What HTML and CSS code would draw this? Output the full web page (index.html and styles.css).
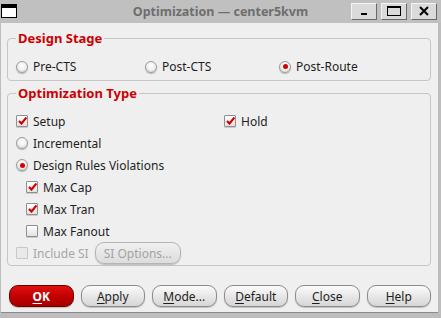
FILE: index.html
```html
<!DOCTYPE html>
<html>
<head>
<meta charset="utf-8">
<link rel="stylesheet" href="styles.css">
</head>
<body>
<div class="window">
  <div class="titlebar">
    <div class="tleft"><div class="winicon"></div></div>
    <div class="title">Optimization — center5kvm</div>
    <div class="wbtns">
      <div class="wbtn"><svg width="12" height="10" viewBox="0 0 12 10"><rect x="3" y="7" width="6" height="2" fill="#000"/></svg></div>
      <div class="wbtn"><svg width="16" height="12" viewBox="0 0 16 12"><rect x="1.5" y="1.5" width="13" height="9" fill="none" stroke="#000" stroke-width="1"/><rect x="1" y="1" width="14" height="2" fill="#000"/></svg></div>
      <div class="wbtn"><svg width="12" height="12" viewBox="0 0 12 12"><path d="M2 2 L10 10 M10 2 L2 10" stroke="#000" stroke-width="2"/></svg></div>
    </div>
  </div>
  <div class="panel">
    <fieldset class="group stage">
      <legend>Design Stage</legend>
      <div class="stage-row">
        <label class="opt"><span class="radio"></span>Pre-CTS</label>
        <label class="opt"><span class="radio"></span>Post-CTS</label>
        <label class="opt"><span class="radio on"></span>Post-Route</label>
      </div>
    </fieldset>
    <fieldset class="group otype">
      <legend>Optimization Type</legend>
      <div class="row two">
        <label class="opt"><span class="check on"></span>Setup</label>
        <label class="opt"><span class="check on"></span>Hold</label>
      </div>
      <div class="row"><label class="opt"><span class="radio"></span>Incremental</label></div>
      <div class="row"><label class="opt"><span class="radio on"></span>Design Rules Violations</label></div>
      <div class="row indent"><label class="opt"><span class="check on"></span>Max Cap</label></div>
      <div class="row indent"><label class="opt"><span class="check on"></span>Max Tran</label></div>
      <div class="row indent"><label class="opt"><span class="check"></span>Max Fanout</label></div>
      <div class="row"><label class="opt disabled"><span class="check"></span>Include SI</label><span class="btn sibtn">SI Options...</span></div>
    </fieldset>
    <div class="buttons">
      <span class="btn ok"><u>O</u>K</span>
      <span class="btn"><u>A</u>pply</span>
      <span class="btn"><u>M</u>ode...</span>
      <span class="btn"><u>D</u>efault</span>
      <span class="btn"><u>C</u>lose</span>
      <span class="btn"><u>H</u>elp</span>
    </div>
  </div>
</div>
</body>
</html>
```
FILE: styles.css
```css
html, body {
  margin: 0;
  padding: 0;
}
body {
  width: 441px;
  height: 318px;
  background: #bdbdbd;
  font-family: "Noto Sans", "Open Sans", sans-serif;
  font-size: 12px;
  color: #1e1e1e;
  overflow: hidden;
}
.window {
  width: 441px;
  height: 318px;
  display: flex;
  flex-direction: column;
}
.titlebar {
  height: 23px;
  display: grid;
  grid-template-columns: 1fr auto 1fr;
  align-items: center;
  background: #c0c0c0;
}
.tleft {
  display: flex;
  align-items: center;
}
.winicon {
  width: 14px;
  height: 9px;
  margin-left: 1px;
  margin-top: -1px;
  border: 1px solid #000;
  border-top: 4px solid #000;
  background: #fff;
}
.title {
  text-align: center;
  font-weight: bold;
  font-size: 12.5px;
  color: #6e6e6e;
  white-space: nowrap;
}
.wbtns {
  display: flex;
  justify-content: flex-end;
  gap: 4px;
  margin-right: 4px;
  margin-top: -1px;
}
.wbtn {
  width: 24px;
  height: 15px;
  border: 1px solid;
  border-color: #f4f4f4 #6a6a6a #6a6a6a #f4f4f4;
  background: #dadada;
  display: flex;
  align-items: center;
  justify-content: center;
}
.panel {
  margin-left: 1px;
  width: 437px;
  height: 289px;
  background: #efefef;
  box-shadow: 0 1px 0 #8a8a8a;
  padding-top: 7px;
  box-sizing: border-box;
  display: flex;
  flex-direction: column;
}
.group {
  margin: 0 7px 0 6px;
  border: 1px solid #c6c6c6;
  border-radius: 4px;
  padding: 0 0 0 8px;
  min-width: 0;
}
.group legend {
  color: #cc0000;
  font-weight: bold;
  font-size: 13px;
  line-height: 16px;
  padding: 0 2px;
  margin-left: 0;
}
.stage {
  padding-top: 12px;
  padding-bottom: 6px;
}
.stage-row {
  display: grid;
  grid-template-columns: 129px 134px auto;
  height: 16px;
  align-items: center;
}
.opt {
  display: flex;
  align-items: center;
  gap: 5px;
  white-space: nowrap;
}
.radio {
  width: 10px;
  height: 10px;
  border-radius: 50%;
  border: 1px solid #9c9c9c;
  background: radial-gradient(circle at 50% 40%, #ffffff 0%, #f2f2f2 45%, #cfcfcf 100%);
  box-shadow: 0 1px 1px rgba(0,0,0,0.25);
  display: flex;
  align-items: center;
  justify-content: center;
  flex: none;
}
.radio.on::after {
  content: "";
  width: 5px;
  height: 5px;
  border-radius: 50%;
  background: #d40000;
}
.check {
  width: 10px;
  height: 10px;
  border: 1px solid #8f8f8f;
  border-radius: 1px;
  background: linear-gradient(#ffffff, #e2e2e2);
  box-shadow: 0 1px 0 rgba(0,0,0,0.15);
  flex: none;
  position: relative;
}
.check.on::after {
  content: "";
  position: absolute;
  left: 1px;
  top: 1px;
  width: 9px;
  height: 8px;
  background: url("data:image/svg+xml;utf8,<svg xmlns='http://www.w3.org/2000/svg' width='9' height='8' viewBox='0 0 9 8'><path d='M1 4 L3.5 6.5 L8.5 0.5' fill='none' stroke='%23d40000' stroke-width='2.2'/></svg>") no-repeat;
}
.otype {
  margin-top: 4px;
  padding-top: 9px;
  padding-bottom: 1px;
}
.row {
  height: 22px;
  display: flex;
  align-items: center;
}
.row.two {
  display: grid;
  grid-template-columns: 208px auto;
}
.row.indent {
  padding-left: 10px;
}
.opt.disabled {
  color: #a6a6a6;
}
.opt.disabled .check {
  border-color: #c8c8c8;
  background: #eaeaea;
  box-shadow: none;
}
.btn {
  height: 20px;
  border: 1px solid #8c8c8c;
  border-radius: 9px;
  background: linear-gradient(#fbfbfb, #e4e4e4 60%, #d6d6d6);
  display: flex;
  align-items: center;
  justify-content: center;
  box-shadow: 0 1px 1px rgba(0,0,0,0.2);
  color: #1e1e1e;
}
.sibtn {
  width: 84px;
  margin-left: 6px;
  color: #a3a3a3;
  border-color: #b5b5b5;
  background: linear-gradient(#f0f0f0, #dddddd);
}
.buttons {
  display: flex;
  gap: 7px;
  margin: 19px 7px 0 8px;
}
.buttons .btn {
  flex: 1;
}
.btn.ok {
  background: linear-gradient(#e01010, #c00000 55%, #a80000);
  border-color: #6a0000;
  color: #fff;
  font-weight: bold;
}
u {
  text-underline-offset: 2px;
}
```
